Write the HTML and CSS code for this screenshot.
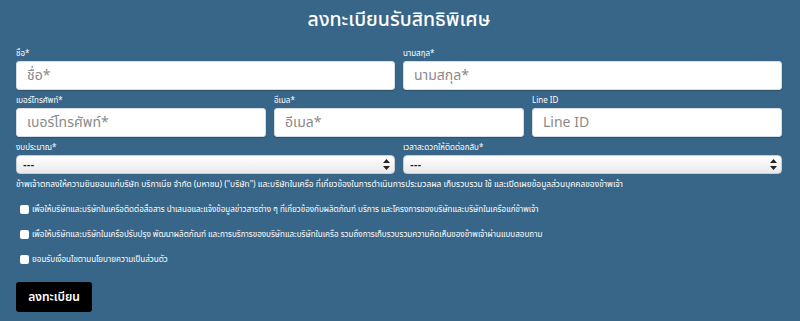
FILE: index.html
```html
<!DOCTYPE html>
<html lang="th">
    <head>
        <meta charset="UTF-8">
        <title>ลงทะเบียนรับสิทธิพิเศษ</title>
        <link rel="stylesheet" href="styles.css">
    </head>
    <body>
        <div class="page">
            <h1 class="title">ลงทะเบียนรับสิทธิพิเศษ</h1>
            <form class="form">
                <div class="row two">
                    <label class="field">
                        <span class="label">ชื่อ*</span>
                        <input type="text" placeholder="ชื่อ*">
                    </label>
                    <label class="field">
                        <span class="label">นามสกุล*</span>
                        <input type="text" placeholder="นามสกุล*">
                    </label>
                </div>
                <div class="row three">
                    <label class="field">
                        <span class="label">เบอร์โทรศัพท์*</span>
                        <input type="text" placeholder="เบอร์โทรศัพท์*">
                    </label>
                    <label class="field">
                        <span class="label">อีเมล*</span>
                        <input type="text" placeholder="อีเมล*">
                    </label>
                    <label class="field">
                        <span class="label">Line ID</span>
                        <input type="text" placeholder="Line ID">
                    </label>
                </div>
                <div class="row two">
                    <label class="field">
                        <span class="label">งบประมาณ*</span>
                        <span class="select-wrap">
                            <select><option>---</option></select>
                            <svg class="arrows" width="7" height="11" viewBox="0 0 7 11"><path d="M3.5 0 L7 4 H0 Z M3.5 11 L7 7 H0 Z" fill="#222"/></svg>
                        </span>
                    </label>
                    <label class="field">
                        <span class="label">เวลาสะดวกให้ติดต่อกลับ*</span>
                        <span class="select-wrap">
                            <select><option>---</option></select>
                            <svg class="arrows" width="7" height="11" viewBox="0 0 7 11"><path d="M3.5 0 L7 4 H0 Z M3.5 11 L7 7 H0 Z" fill="#222"/></svg>
                        </span>
                    </label>
                </div>
                <p class="consent">ข้าพเจ้าตกลงให้ความยินยอมแก่บริษัท บริกาเนีย จำกัด (มหาชน) ("บริษัท") และบริษัทในเครือ ที่เกี่ยวข้องในการดำเนินการประมวลผล เก็บรวบรวม ใช้ และเปิดเผยข้อมูลส่วนบุคคลของข้าพเจ้า</p>
                <label class="check"><input type="checkbox"><span>เพื่อให้บริษัทและบริษัทในเครือติดต่อสื่อสาร นำเสนอและแจ้งข้อมูลข่าวสารต่าง ๆ ที่เกี่ยวข้องกับผลิตภัณฑ์ บริการ และโครงการของบริษัทและบริษัทในเครือแก่ข้าพเจ้า</span></label>
                <label class="check"><input type="checkbox"><span>เพื่อให้บริษัทและบริษัทในเครือปรับปรุง พัฒนาผลิตภัณฑ์ และการบริการของบริษัทและบริษัทในเครือ รวมถึงการเก็บรวบรวมความคิดเห็นของข้าพเจ้าผ่านแบบสอบถาม</span></label>
                <label class="check"><input type="checkbox"><span>ยอมรับเงื่อนไขตามนโยบายความเป็นส่วนตัว</span></label>
                <button type="button" class="submit">ลงทะเบียน</button>
            </form>
        </div>
    </body>
</html>
```

FILE: styles.css
```css
body {
    margin: 0;
    background: #386688;
    color: white;
    font-family: "Noto Sans Thai", "Noto Sans", "DejaVu Sans", sans-serif;
}

.page {
    padding: 0 18px 0 16px;
}

.title {
    margin: 0 0 3px;
    height: 40px;
    line-height: 40px;
    font-size: 19.5px;
    font-weight: 500;
    text-align: center;
}

.form {
    display: flex;
    flex-direction: column;
    align-items: flex-start;

    .row {
        display: grid;
        column-gap: 8px;
        width: 100%;
    }

    .two {
        grid-template-columns: 1fr 1fr;
    }

    .three {
        grid-template-columns: 1fr 1fr 1fr;
    }

    .field {
        display: flex;
        flex-direction: column;
        min-width: 0;
    }

    .label {
        height: 12px;
        line-height: 12px;
        margin: 5px 0 1px;
        font-size: 8px;
        white-space: nowrap;
    }

    input[type="text"] {
        display: block;
        box-sizing: border-box;
        height: 29px;
        width: 100%;
        margin: 0;
        padding: 0 10px;
        border: 1px solid #d6dde3;
        border-radius: 3px;
        background: white;
        font-family: inherit;
        font-size: 14px;
        color: #333;
        box-shadow: 0 1px 1px rgba(0, 0, 0, 0.2);
    }

    input[type="text"]::placeholder {
        color: #8a8a8a;
    }

    .select-wrap {
        position: relative;
        display: block;
        height: 19px;
    }

    select {
        display: block;
        appearance: none;
        box-sizing: border-box;
        width: 100%;
        height: 19px;
        margin: 0;
        padding: 0 6px;
        border: 1px solid #c9ced2;
        border-radius: 4px;
        background: linear-gradient(#ffffff, #e9e9e9);
        font-family: "DejaVu Sans", sans-serif;
        font-size: 9px;
        font-weight: bold;
        color: #222;
    }

    .arrows {
        position: absolute;
        right: 5px;
        top: 4px;
        pointer-events: none;
    }

    .consent {
        height: 14px;
        margin: 4px 0 5px;
        line-height: 14px;
        font-size: 8.4px;
        white-space: nowrap;
    }

    .check {
        display: flex;
        align-items: center;
        height: 25px;
        font-size: 8.05px;
        white-space: nowrap;

        input {
            appearance: none;
            flex: none;
            width: 9px;
            height: 9px;
            margin: 0 3px 0 4px;
            border-radius: 2px;
            background: white;
        }
    }

    .submit {
        margin-top: 10px;
        width: 76px;
        height: 30px;
        padding: 0;
        border: none;
        border-radius: 3px;
        background: black;
        color: white;
        font-family: inherit;
        font-size: 12px;
        font-weight: 600;
    }
}
```
